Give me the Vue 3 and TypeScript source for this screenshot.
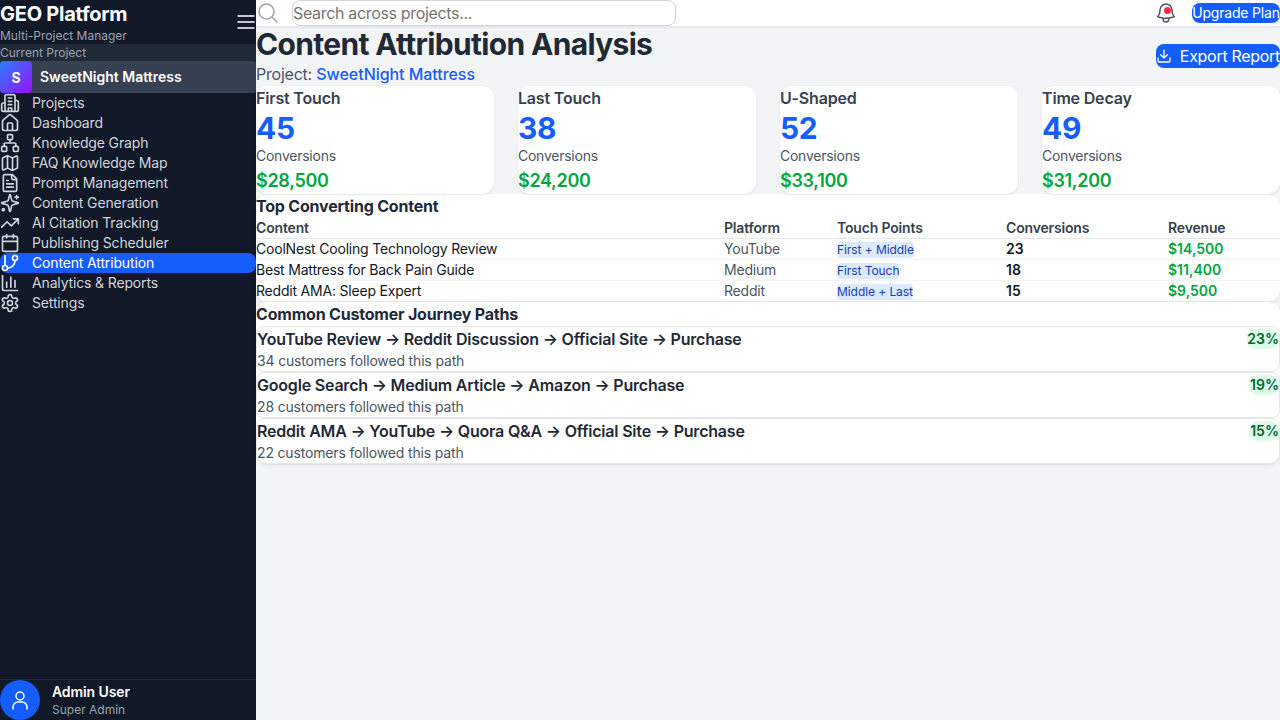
<template>
  <div class="app">
    <aside class="sidebar">
      <div class="brand">
        <div>
          <h1>GEO Platform</h1>
          <p>Multi-Project Manager</p>
        </div>
        <svg class="menu" viewBox="0 0 24 24" fill="none" stroke="currentColor" stroke-width="1.5" stroke-linecap="round"><path d="M4 6h16M4 12h16M4 18h16" /></svg>
      </div>
      <div class="current">
        <div class="current-label">Current Project</div>
        <div class="current-project">
          <span class="project-avatar">S</span>
          <span class="project-name">SweetNight Mattress</span>
        </div>
      </div>
      <nav class="nav">
        <a v-for="item in navItems" :key="item.label" class="nav-item" :class="{ active: item.active }">
          <svg viewBox="0 0 24 24" fill="none" stroke="currentColor" stroke-width="2" stroke-linecap="round" stroke-linejoin="round"><path :d="item.icon" /></svg>
          <span>{{ item.label }}</span>
        </a>
      </nav>
      <div class="user">
        <span class="user-avatar">
          <svg viewBox="0 0 24 24" fill="none" stroke="currentColor" stroke-width="1.5" stroke-linecap="round" stroke-linejoin="round"><circle cx="12" cy="8" r="4" /><path d="M5 21v-2a5 5 0 0 1 5-5h4a5 5 0 0 1 5 5v2" /></svg>
        </span>
        <div>
          <div class="user-name">Admin User</div>
          <div class="user-role">Super Admin</div>
        </div>
      </div>
    </aside>

    <div class="main">
      <header class="topbar">
        <svg class="search-icon" viewBox="0 0 24 24" fill="none" stroke="currentColor" stroke-width="1.5" stroke-linecap="round" stroke-linejoin="round"><path d="m21 21-5.197-5.197m0 0A7.5 7.5 0 1 0 5.196 5.196a7.5 7.5 0 0 0 10.607 10.607Z" /></svg>
        <input class="search" type="text" placeholder="Search across projects..." />
        <div class="topbar-right">
          <span class="bell">
            <svg viewBox="0 0 24 24" fill="none" stroke="currentColor" stroke-width="1.5" stroke-linecap="round" stroke-linejoin="round"><path d="M14.857 17.082a23.848 23.848 0 0 0 5.454-1.31A8.967 8.967 0 0 1 18 9.75V9A6 6 0 0 0 6 9v.75a8.967 8.967 0 0 1-2.312 6.022c1.733.64 3.56 1.085 5.455 1.31m5.714 0a24.255 24.255 0 0 1-5.714 0m5.714 0a3 3 0 1 1-5.714 0" /></svg>
            <i class="bell-dot"></i>
          </span>
          <button class="upgrade">Upgrade Plan</button>
        </div>
      </header>

      <main class="content">
        <div class="page-head">
          <div>
            <h2>Content Attribution Analysis</h2>
            <p>Project: <span>SweetNight Mattress</span></p>
          </div>
          <button class="export">
            <svg viewBox="0 0 24 24" fill="none" stroke="currentColor" stroke-width="2" stroke-linecap="round" stroke-linejoin="round"><path d="M21 15v4a2 2 0 0 1-2 2H5a2 2 0 0 1-2-2v-4M7 10l5 5 5-5M12 15V3" /></svg>
            Export Report
          </button>
        </div>

        <div class="models">
          <div v-for="m in models" :key="m.name" class="model-card">
            <div class="model-name">{{ m.name }}</div>
            <div class="model-count">{{ m.count }}</div>
            <div class="model-label">Conversions</div>
            <div class="model-value">{{ m.value }}</div>
          </div>
        </div>

        <section class="panel">
          <h3>Top Converting Content</h3>
          <table>
            <colgroup>
              <col class="col-content" />
              <col class="col-platform" />
              <col class="col-touch" />
              <col class="col-conv" />
              <col />
            </colgroup>
            <thead>
              <tr>
                <th>Content</th>
                <th>Platform</th>
                <th>Touch Points</th>
                <th>Conversions</th>
                <th>Revenue</th>
              </tr>
            </thead>
            <tbody>
              <tr v-for="r in rows" :key="r.content">
                <td class="c-content">{{ r.content }}</td>
                <td class="c-platform">{{ r.platform }}</td>
                <td><span class="tag">{{ r.touch }}</span></td>
                <td class="c-conv">{{ r.conversions }}</td>
                <td class="c-rev">{{ r.revenue }}</td>
              </tr>
            </tbody>
          </table>
        </section>

        <section class="panel">
          <h3>Common Customer Journey Paths</h3>
          <div v-for="p in paths" :key="p.route" class="path">
            <div class="path-text">
              <div class="path-route">{{ p.route }}</div>
              <div class="path-count">{{ p.count }} customers followed this path</div>
            </div>
            <span class="path-share">{{ p.share }}</span>
          </div>
        </section>
      </main>
    </div>
  </div>
</template>

<script setup lang="ts">
interface NavItem {
  label: string
  icon: string
  active?: boolean
}

const navItems: NavItem[] = [
  { label: 'Projects', icon: 'M6 22V4a2 2 0 0 1 2-2h8a2 2 0 0 1 2 2v18ZM6 12H4a2 2 0 0 0-2 2v6a2 2 0 0 0 2 2h2M18 9h2a2 2 0 0 1 2 2v9a2 2 0 0 1-2 2h-2M10 6h4M10 10h4M10 14h4M10 22v-4h4v4' },
  { label: 'Dashboard', icon: 'M15 21v-8a1 1 0 0 0-1-1h-4a1 1 0 0 0-1 1v8M3 10a2 2 0 0 1 .709-1.528l7-5.999a2 2 0 0 1 2.582 0l7 5.999A2 2 0 0 1 21 10v9a2 2 0 0 1-2 2H5a2 2 0 0 1-2-2z' },
  { label: 'Knowledge Graph', icon: 'M17 16h4a1 1 0 0 1 1 1v4a1 1 0 0 1-1 1h-4a1 1 0 0 1-1-1v-4a1 1 0 0 1 1-1ZM3 16h4a1 1 0 0 1 1 1v4a1 1 0 0 1-1 1H3a1 1 0 0 1-1-1v-4a1 1 0 0 1 1-1ZM10 2h4a1 1 0 0 1 1 1v4a1 1 0 0 1-1 1h-4a1 1 0 0 1-1-1V3a1 1 0 0 1 1-1ZM5 16v-3a1 1 0 0 1 1-1h12a1 1 0 0 1 1 1v3M12 12V8' },
  { label: 'FAQ Knowledge Map', icon: 'M14.106 5.553a2 2 0 0 0 1.788 0l3.659-1.83A1 1 0 0 1 21 4.619v12.764a1 1 0 0 1-.553.894l-4.553 2.277a2 2 0 0 1-1.788 0l-4.212-2.106a2 2 0 0 0-1.788 0l-3.659 1.83A1 1 0 0 1 3 19.381V6.618a1 1 0 0 1 .553-.894l4.553-2.277a2 2 0 0 1 1.788 0zM15 5.764v15M9 3.236v15' },
  { label: 'Prompt Management', icon: 'M15 2H6a2 2 0 0 0-2 2v16a2 2 0 0 0 2 2h12a2 2 0 0 0 2-2V7ZM14 2v4a2 2 0 0 0 2 2h4M10 9H8M16 13H8M16 17H8' },
  { label: 'Content Generation', icon: 'M9.937 15.5A2 2 0 0 0 8.5 14.063l-6.135-1.582a.5.5 0 0 1 0-.962L8.5 9.936A2 2 0 0 0 9.937 8.5l1.582-6.135a.5.5 0 0 1 .963 0L14.063 8.5A2 2 0 0 0 15.5 9.937l6.135 1.581a.5.5 0 0 1 0 .964L15.5 14.063a2 2 0 0 0-1.437 1.437l-1.582 6.135a.5.5 0 0 1-.963 0zM20 3v4M22 5h-4M5.2 20a1.2 1.2 0 1 1-2.4 0 1.2 1.2 0 0 1 2.4 0Z' },
  { label: 'AI Citation Tracking', icon: 'M22 7l-8.5 8.5-5-5L2 17M16 7h6v6' },
  { label: 'Publishing Scheduler', icon: 'M8 2v4M16 2v4M5 4h14a2 2 0 0 1 2 2v14a2 2 0 0 1-2 2H5a2 2 0 0 1-2-2V6a2 2 0 0 1 2-2ZM3 10h18' },
  { label: 'Content Attribution', icon: 'M6 3v12M21 6a3 3 0 1 1-6 0 3 3 0 0 1 6 0ZM9 18a3 3 0 1 1-6 0 3 3 0 0 1 6 0ZM18 9a9 9 0 0 1-9 9', active: true },
  { label: 'Analytics & Reports', icon: 'M3 3v16a2 2 0 0 0 2 2h16M18 17V9M13 17V5M8 17v-6' },
  { label: 'Settings', icon: 'M12.22 2h-.44a2 2 0 0 0-2 2v.18a2 2 0 0 1-1 1.73l-.43.25a2 2 0 0 1-2 0l-.15-.08a2 2 0 0 0-2.73.73l-.22.38a2 2 0 0 0 .73 2.73l.15.1a2 2 0 0 1 1 1.72v.51a2 2 0 0 1-1 1.74l-.15.09a2 2 0 0 0-.73 2.73l.22.38a2 2 0 0 0 2.73.73l.15-.08a2 2 0 0 1 2 0l.43.25a2 2 0 0 1 1 1.73V20a2 2 0 0 0 2 2h.44a2 2 0 0 0 2-2v-.18a2 2 0 0 1 1-1.73l.43-.25a2 2 0 0 1 2 0l.15.08a2 2 0 0 0 2.73-.73l.22-.39a2 2 0 0 0-.73-2.73l-.15-.08a2 2 0 0 1-1-1.74v-.5a2 2 0 0 1 1-1.74l.15-.09a2 2 0 0 0 .73-2.73l-.22-.38a2 2 0 0 0-2.73-.73l-.15.08a2 2 0 0 1-2 0l-.43-.25a2 2 0 0 1-1-1.73V4a2 2 0 0 0-2-2zM15 12a3 3 0 1 1-6 0 3 3 0 0 1 6 0Z' }
]

const models = [
  { name: 'First Touch', count: 45, value: '$28,500' },
  { name: 'Last Touch', count: 38, value: '$24,200' },
  { name: 'U-Shaped', count: 52, value: '$33,100' },
  { name: 'Time Decay', count: 49, value: '$31,200' }
]

const rows = [
  { content: 'CoolNest Cooling Technology Review', platform: 'YouTube', touch: 'First + Middle', conversions: 23, revenue: '$14,500' },
  { content: 'Best Mattress for Back Pain Guide', platform: 'Medium', touch: 'First Touch', conversions: 18, revenue: '$11,400' },
  { content: 'Reddit AMA: Sleep Expert', platform: 'Reddit', touch: 'Middle + Last', conversions: 15, revenue: '$9,500' }
]

const paths = [
  { route: 'YouTube Review → Reddit Discussion → Official Site → Purchase', count: 34, share: '23%' },
  { route: 'Google Search → Medium Article → Amazon → Purchase', count: 28, share: '19%' },
  { route: 'Reddit AMA → YouTube → Quora Q&A → Official Site → Purchase', count: 22, share: '15%' }
]
</script>

<style>
html,
body {
  margin: 0;
  height: 100%;
  overflow: hidden;
}
</style>

<style scoped>
* {
  box-sizing: border-box;
}

.app {
  display: flex;
  height: 720px;
  font-family: Inter, "Liberation Sans", sans-serif;
  background: #f3f4f6;
  color: #111827;
}

.sidebar {
  width: 256px;
  flex-shrink: 0;
  display: flex;
  flex-direction: column;
  background: #111827;
  color: #d1d5db;
}

.brand {
  display: flex;
  justify-content: space-between;
  align-items: center;
}

.brand h1 {
  margin: 0;
  font-size: 20px;
  line-height: 28px;
  font-weight: 700;
  letter-spacing: -0.25px;
  color: #fff;
}

.brand p {
  margin: 0;
  font-size: 12px;
  line-height: 16px;
  color: #9ca3af;
}

.menu {
  width: 24px;
  height: 24px;
  margin-right: -2px;
  color: #fff;
}

.current {
  background: #1f2937;
}

.current-label {
  font-size: 12px;
  line-height: 17px;
  color: #9ca3af;
}

.current-project {
  display: flex;
  align-items: center;
  gap: 8px;
  background: #374151;
  border-radius: 4px;
}

.project-avatar {
  width: 32px;
  height: 32px;
  display: flex;
  align-items: center;
  justify-content: center;
  border-radius: 4px;
  background: linear-gradient(135deg, #2b7fff, #9810fa);
  color: #fff;
  font-size: 14px;
  font-weight: 700;
}

.project-name {
  font-size: 14px;
  line-height: 20px;
  font-weight: 600;
  color: #fff;
}

.nav {
  flex: 1;
  display: flex;
  flex-direction: column;
}

.nav-item {
  display: flex;
  align-items: center;
  gap: 12px;
  height: 20px;
  font-size: 14px;
  line-height: 20px;
  letter-spacing: -0.15px;
  border-radius: 8px;
}

.nav-item svg {
  width: 20px;
  height: 20px;
  flex-shrink: 0;
}

.nav-item.active {
  background: #155dfc;
  color: #fff;
}

.user {
  display: flex;
  align-items: center;
  gap: 12px;
  border-top: 1px solid #1f2937;
}

.user-avatar {
  width: 40px;
  height: 40px;
  display: flex;
  align-items: center;
  justify-content: center;
  border-radius: 50%;
  background: #155dfc;
  color: #fff;
}

.user-avatar svg {
  width: 24px;
  height: 24px;
}

.user-name {
  font-size: 14px;
  line-height: 20px;
  font-weight: 600;
  letter-spacing: -0.1px;
  color: #fff;
}

.user-role {
  font-size: 12px;
  line-height: 16px;
  color: #9ca3af;
}

.main {
  flex: 1;
  min-width: 0;
  display: flex;
  flex-direction: column;
}

.topbar {
  height: 27px;
  display: flex;
  align-items: flex-start;
  gap: 12px;
  background: #fff;
  border-bottom: 1px solid #e5e7eb;
  box-shadow: 0 1px 2px rgba(0, 0, 0, 0.05);
}

.search-icon {
  width: 24px;
  height: 24px;
  margin-top: 1px;
  color: #9ca3af;
}

.search {
  width: 384px;
  height: 26px;
  padding: 0;
  border: 1px solid #d1d5db;
  border-radius: 8px;
  font: 16px Inter, sans-serif;
  letter-spacing: -0.33px;
  outline: none;
}

.search::placeholder {
  color: #757575;
}

.topbar-right {
  margin-left: auto;
  display: flex;
  align-items: center;
  gap: 14px;
  height: 26px;
}

.bell {
  position: relative;
  display: block;
  width: 24px;
  height: 24px;
  color: #4b5563;
}

.bell svg {
  display: block;
  width: 24px;
  height: 24px;
}

.bell-dot {
  position: absolute;
  top: 6px;
  left: 10px;
  width: 7px;
  height: 7px;
  border-radius: 50%;
  background: #fb2c36;
}

.upgrade {
  height: 20px;
  width: 88px;
  padding: 0;
  border: 0;
  border-radius: 8px;
  background: #155dfc;
  color: #fff;
  font: 14px/20px Inter, sans-serif;
  letter-spacing: -0.2px;
  white-space: nowrap;
}

.page-head {
  display: flex;
  justify-content: space-between;
  align-items: center;
}

.page-head h2 {
  margin: 0;
  font-size: 30px;
  line-height: 34px;
  font-weight: 700;
  letter-spacing: -0.68px;
  color: #1f2937;
}

.page-head p {
  margin: 2px 0 0;
  font-size: 16px;
  line-height: 23px;
  letter-spacing: -0.22px;
  color: #4b5563;
}

.page-head p span {
  color: #155dfc;
  font-weight: 500;
  letter-spacing: -0.05px;
}

.export {
  display: flex;
  align-items: center;
  gap: 8px;
  height: 24px;
  margin-bottom: 1px;
  padding: 0;
  border: 0;
  border-radius: 8px;
  background: #155dfc;
  color: #fff;
  font: 16px/24px Inter, sans-serif;
  letter-spacing: -0.3px;
}

.export svg {
  width: 16px;
  height: 16px;
}

.models {
  display: grid;
  grid-template-columns: repeat(4, 1fr);
  gap: 24px;
}

.model-card {
  background: #fff;
  border-radius: 12px;
  box-shadow: 0 1px 2px rgba(0, 0, 0, 0.1);
}

.model-name {
  font-size: 16px;
  line-height: 24px;
  font-weight: 600;
  letter-spacing: -0.18px;
  color: #374151;
}

.model-count {
  font-size: 30px;
  line-height: 36px;
  font-weight: 700;
  letter-spacing: -0.3px;
  color: #155dfc;
}

.model-label {
  font-size: 14px;
  line-height: 20px;
  letter-spacing: -0.25px;
  color: #4b5563;
}

.model-value {
  margin-bottom: -2px;
  font-size: 18px;
  line-height: 30px;
  font-weight: 600;
  letter-spacing: -0.3px;
  color: #00a63e;
}

.panel {
  background: #fff;
  border-radius: 12px;
  box-shadow: 0 1px 2px rgba(0, 0, 0, 0.1);
}

.panel h3 {
  margin: 0;
  font-size: 16px;
  line-height: 24px;
  font-weight: 700;
  letter-spacing: -0.2px;
  color: #1f2937;
}

table {
  width: 100%;
  border-collapse: collapse;
  table-layout: fixed;
  font-size: 14px;
}

.col-content {
  width: 468px;
}

.col-platform {
  width: 113px;
}

.col-touch {
  width: 169px;
}

.col-conv {
  width: 162px;
}

th {
  padding: 0;
  height: 20px;
  text-align: left;
  font-weight: 600;
  line-height: 20px;
  letter-spacing: -0.17px;
  color: #374151;
  border-bottom: 1px solid #e5e7eb;
}

td {
  padding: 0;
  height: 21px;
  line-height: 20px;
  letter-spacing: -0.2px;
  border-bottom: 1px solid #e5e7eb;
}

tbody tr:nth-child(-n + 2) td {
  border-bottom-color: #f3f4f6;
}

.c-content {
  color: #111827;
}

.c-platform {
  color: #4b5563;
}

.tag {
  display: inline-block;
  background: #dbeafe;
  color: #193cb8;
  font-size: 12px;
  line-height: 16px;
  letter-spacing: -0.07px;
  border-radius: 4px;
}

.c-conv {
  font-weight: 600;
  letter-spacing: 0;
}

.c-rev {
  font-weight: 600;
  letter-spacing: 0;
  color: #00a63e;
}

.path {
  display: flex;
  justify-content: space-between;
  align-items: flex-start;
  border: 1px solid #e5e7eb;
  border-radius: 8px;
}

.path-route {
  font-size: 16px;
  line-height: 24px;
  font-weight: 600;
  letter-spacing: -0.2px;
  color: #1f2937;
}

.path-count {
  font-size: 14px;
  line-height: 20px;
  letter-spacing: -0.16px;
  color: #4b5563;
}

.path-share {
  margin-top: 2px;
  padding-left: 1px;
  font-size: 14px;
  line-height: 20px;
  font-weight: 600;
  color: #016630;
  background: #dcfce7;
  border-radius: 9999px;
}
</style>
